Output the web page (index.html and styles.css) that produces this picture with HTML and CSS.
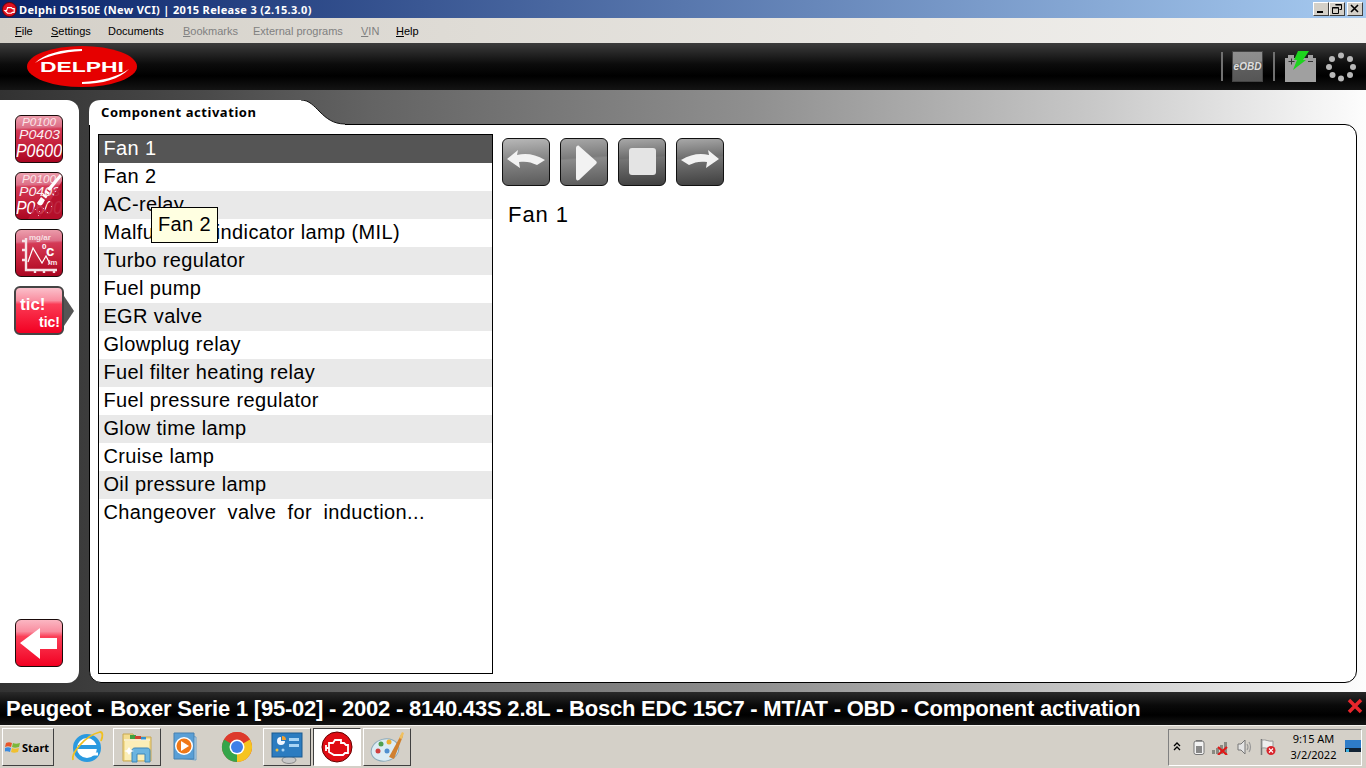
FILE: index.html
```html
<!DOCTYPE html>
<html>
<head>
<meta charset="UTF-8">
<title>Delphi DS150E</title>
<link rel="stylesheet" href="styles.css">
</head>
<body>
<div class="titlebar">
	<svg class="title-icon" width="15" height="15" viewBox="0 0 16 16"><circle cx="8" cy="8" r="7.500" fill="#e01020" stroke="#600" stroke-width="1"/><path d="M3 9h2l1-3h4l1 1h2v4h-2l-1 1H6z" fill="none" stroke="#fff" stroke-width="1.200"/></svg>
	<span class="title-text">Delphi DS150E (New VCI) | 2015 Release 3 (2.15.3.0)</span>
	<div class="win-btns">
		<span class="win-btn"><svg width="10" height="10" viewBox="0 0 10 10"><rect x="1" y="7" width="6" height="2" fill="#000"/></svg></span>
		<span class="win-btn"><svg width="10" height="10" viewBox="0 0 10 10"><path d="M3.500 .5h6v5h-2M.5 3.500h6v6h-6z M.5 4h6 M3.500 1h6" fill="none" stroke="#000"/></svg></span>
		<span class="win-btn win-close"><svg width="10" height="10" viewBox="0 0 10 10"><path d="M1 1l7 7M8 1l-7 7" stroke="#000" stroke-width="1.600"/></svg></span>
	</div>
</div>

<div class="menubar">
	<span class="menu-item m1"><u>F</u>ile</span>
	<span class="menu-item m2"><u>S</u>ettings</span>
	<span class="menu-item m3">Documents</span>
	<span class="menu-item m4 off"><u>B</u>ookmarks</span>
	<span class="menu-item m5 off">External programs</span>
	<span class="menu-item m6 off"><u>V</u>IN</span>
	<span class="menu-item"><u>H</u>elp</span>
</div>

<div class="header">
	<svg class="logo" width="110" height="41" viewBox="0 0 110 41">
		<ellipse cx="55" cy="20.500" rx="55" ry="20.500" fill="#e60000"/>
		<path d="M55 3C35 3 17 8 8 17 19 10 36 6 55 5z" fill="#fff"/>
		<path d="M55 38c20 0 38-5 47-15C91 31 74 35 55 36z" fill="#fff"/>
		<text x="55" y="26" class="logo-text" text-anchor="middle" textLength="84" lengthAdjust="spacingAndGlyphs">DELPHI</text>
	</svg>
	<div class="header-right">
		<span class="sep"></span>
		<span class="eobd">eOBD</span>
		<span class="sep"></span>
		<svg class="battery" width="33" height="32" viewBox="0 0 33 32">
			<path d="M1 7h3V4h6v3h14V4h5v3h3v24H1z" fill="#a0a0a0"/>
			<path d="M4.500 10.500h6M7.500 7.500v6" stroke="#333" stroke-width="1"/>
			<path d="M24 10.500h5" stroke="#333" stroke-width="1"/>
			<path d="M14 0h11l-6 9h3L9 19l4-10h-3z" fill="#1ed41e"/>
		</svg>
		<svg class="spinner" width="30" height="30" viewBox="0 0 30 30">
			<g fill="#b8b8b8"><circle cx="15" cy="3.500" r="3"/><circle cx="24" cy="7" r="3"/><circle cx="27" cy="15" r="3"/><circle cx="24" cy="23" r="3"/><circle cx="15" cy="26.500" r="3"/><circle cx="6.500" cy="23" r="3"/><circle cx="3" cy="15" r="3"/><circle cx="6" cy="7" r="3"/></g>
		</svg>
	</div>
</div>

<div class="workspace">
	<div class="sidebar">
		<div class="side-btn">
			<svg width="46" height="46" viewBox="0 0 46 46" class="side-svg">
				<text x="6" y="10" class="code c1" textLength="34" lengthAdjust="spacingAndGlyphs">P0100</text>
				<text x="3" y="23" class="code c2" textLength="41" lengthAdjust="spacingAndGlyphs">P0403</text>
				<text x="0" y="41" class="code c3" textLength="46" lengthAdjust="spacingAndGlyphs">P0600</text>
			</svg>
		</div>
		<div class="side-btn">
			<svg width="46" height="46" viewBox="0 0 46 46" class="side-svg">
				<text x="6" y="10" class="code c1" textLength="34" lengthAdjust="spacingAndGlyphs">P0100</text>
				<text x="3" y="23" class="code c2" textLength="41" lengthAdjust="spacingAndGlyphs">P0403</text>
				<text x="0" y="41" class="code c3" textLength="46" lengthAdjust="spacingAndGlyphs">P0600</text>
				<path d="M24 46L46 8v38z" fill="#b50f2b" opacity=".9"/>
				<path d="M12 46L24 24l8 4-8 18z" fill="#bd1432" opacity=".85"/>
				<path d="M44 1l2 2-12 15-3-2z" fill="#fff"/>
				<path d="M30 17l4 3-1.500 2-4-3zM27.500 20.500l4 3-1.500 2-4-3zM25 24l4 3-3 5c-2 1-4 0-5-2z" fill="#fff"/>
				<path d="M19 36h1v1h-1zM23 38h1v1h-1zM27 35h1v1h-1zM31 39h1v1h-1zM35 33h1v1h-1zM22 42h1v1h-1z" fill="#f0b0bc"/>
			</svg>
		</div>
		<div class="side-btn">
			<svg width="46" height="46" viewBox="0 0 46 46" class="side-svg">
				<path d="M10 8v32h31M6 11h4M6 20h4M6 30h4M19 40v3M28 40v3M38 40v3" fill="none" stroke="#f6e2e6" stroke-width="2.400"/>
				<path d="M12 32l5-14 9 15 4-7 4 8" fill="none" stroke="#fff" stroke-width="1.200"/>
				<text x="13" y="10" class="unit">mg/ar</text>
				<text x="26" y="19" class="unit-small">0</text>
				<text x="30" y="26" class="unit-big">c</text>
				<text x="32" y="35" class="unit">/m</text>
			</svg>
		</div>
		<div class="side-btn active">
			<svg class="side-svg" width="46" height="46" viewBox="0 0 46 46">
				<text x="4" y="22" class="tic t1">tic!</text>
				<text x="23" y="39" class="tic t2">tic!</text>
			</svg>
			<span class="active-arrow"></span>
		</div>
		<div class="side-spacer"></div>
		<div class="side-btn bright">
			<svg class="side-svg" width="46" height="46" viewBox="0 0 46 46"><path d="M4 23L24 8v10h17v11H24v10z" fill="#fff"/></svg>
		</div>
	</div>

	<div class="panel">
		<div class="tab-row">
			<svg class="tab-shape" width="256" height="25" viewBox="0 0 256 25"><path d="M0 25V12Q0 0 12 0H212C228 0 232 24 256 24V25z" fill="#fff"/><path d="M212 0C228 0 232 24 256 24" fill="none" stroke="#111" stroke-width="1"/></svg>
			<span class="tab-label">Component activation</span>
		</div>
		<div class="panel-body">
			<div class="list">
				<div class="row selected">Fan 1</div>
				<div class="row">Fan 2</div>
				<div class="row">AC-relay</div>
				<div class="row">Malfunction indicator lamp (MIL)</div>
				<div class="row">Turbo regulator</div>
				<div class="row">Fuel pump</div>
				<div class="row">EGR valve</div>
				<div class="row">Glowplug relay</div>
				<div class="row">Fuel filter heating relay</div>
				<div class="row">Fuel pressure regulator</div>
				<div class="row">Glow time lamp</div>
				<div class="row">Cruise lamp</div>
				<div class="row">Oil pressure lamp</div>
				<div class="row wide">Changeover valve for induction...</div>
			</div>
			<div class="tooltip">Fan 2</div>
			<div class="detail">
				<div class="tools">
					<div class="tool light"><svg width="46" height="46" viewBox="0 0 46 46"><path d="M4 20l11-9-1 5c9-2 18-1 28 5l-8 5c-6-3-11-4-18-3l1 6z" fill="#f2f2f2"/></svg></div>
					<div class="tool mid"><svg width="46" height="46" viewBox="0 0 46 46"><path d="M15 9c0-2 2-3 3-2l17 15c1 1 1 2 0 3L18 41c-2 1-3 0-3-2z" fill="#f2f2f2"/></svg></div>
					<div class="tool"><svg width="46" height="46" viewBox="0 0 46 46"><rect x="10" y="9" width="27" height="27" rx="3" fill="#e4e4e4"/></svg></div>
					<div class="tool"><svg width="46" height="46" viewBox="0 0 46 46"><path d="M42 20l-11-9 1 5c-9-2-18-1-28 5l8 5c6-3 11-4 18-3l-1 6z" fill="#f2f2f2"/></svg></div>
				</div>
				<div class="detail-name">Fan 1</div>
			</div>
		</div>
	</div>
</div>

<div class="statusbar">
	<span class="status-text">Peugeot - Boxer Serie 1 [95-02] - 2002 - 8140.43S 2.8L - Bosch EDC 15C7 - MT/AT - OBD - Component activation</span>
	<svg class="status-x" width="16" height="16" viewBox="0 0 16 16"><path d="M2 2l12 12M14 2L2 14" stroke="#e8262c" stroke-width="3.500"/></svg>
</div>

<div class="taskbar">
	<div class="start">
		<svg width="16" height="15" viewBox="0 0 16 15"><path d="M1 3c2-1 4-1 6 0l-1 4C4 6 2 6 0 7z" fill="#e8562a"/><path d="M8 3c2 1 4 1 7 0l-1 4c-3 1-5 1-7 0z" fill="#7cb83a"/><path d="M0 8c2-1 4-1 6 0l-1 4c-2-1-4-1-6 0z" fill="#3a8ade"/><path d="M7 8c2 1 4 1 7 0l-1 4c-3 1-5 1-7 0z" fill="#f0c030"/></svg>
		<span>Start</span>
	</div>
	<div class="task-items">
		<div class="task">
			<svg width="34" height="34" viewBox="0 0 34 34"><ellipse cx="17" cy="18" rx="12" ry="12" fill="#fff" stroke="#2a9ae0" stroke-width="4"/><path d="M8 17h19" stroke="#2a9ae0" stroke-width="4"/><path d="M28 24H18" stroke="#fff" stroke-width="3"/><path d="M3 30C1 24 14 6 30 2c3 0 3 4 1 9" fill="none" stroke="#f0c020" stroke-width="1.800"/></svg>
		</div>
		<div class="task btn">
			<svg width="32" height="32" viewBox="0 0 32 32"><path d="M2 3h10l2 3h16v24H2z" fill="#f3dc8e" stroke="#c8a850"/><path d="M9 4h6v4H9z" fill="#40a040"/><path d="M14 5h6v3h-6z" fill="#d04030"/><path d="M20 6h5v3h-5z" fill="#3090d0"/><path d="M3 9h26" stroke="#fff"/><path d="M4 10h24v19H4z" fill="#fbeeb8"/><path d="M11 31V20c0-2 1-3 3-3h12c2 0 3 1 3 3v11h-5v-8H16v8z" fill="#6ab4e0" stroke="#3d86b8"/><path d="M8 16l2 3 3 1-3 1-2 3-2-3-3-1 3-1z" fill="#fff"/></svg>
		</div>
		<div class="task">
			<svg width="34" height="32" viewBox="0 0 34 32"><path d="M8 3l18 3v23L8 27z" fill="#bcd9ee" stroke="#6ea0c8"/><path d="M4 2h20v26H4z" fill="#5a9fd6" stroke="#4680b0"/><circle cx="14" cy="15" r="9" fill="#fff"/><circle cx="14" cy="15" r="7.500" fill="#f07818"/><path d="M11 10l8 5-8 5z" fill="#fff"/></svg>
		</div>
		<div class="task">
			<svg width="32" height="32" viewBox="0 0 32 32"><circle cx="16" cy="16" r="15" fill="#dd3a2c"/><path d="M16 16L29 8.500A15 15 0 0 1 16 31z" fill="#f6c420"/><path d="M16 16L16 31A15 15 0 0 1 3 8.500z" fill="#35a54a"/><path d="M3 8.500A15 15 0 0 1 29 8.500H16z" fill="#dd3a2c"/><circle cx="16" cy="16" r="7.500" fill="#fff"/><circle cx="16" cy="16" r="6" fill="#3f7fe8"/></svg>
		</div>
		<div class="task btn">
			<svg width="34" height="34" viewBox="0 0 34 34"><ellipse cx="19" cy="30" rx="7" ry="3.500" fill="#c8c8c8" stroke="#888"/><rect x="2" y="3" width="30" height="24" fill="#2c7cc0" stroke="#1a5a90"/><path d="M11 7a4 4 0 1 0 4 4h-4z" fill="#f0f6ff"/><path d="M12 6a4 4 0 0 1 4 4h-4z" fill="#f0a030"/><path d="M19 8h10v3H19zM19 14h10v3H19z" fill="#a8d4f4"/><circle cx="7" cy="20" r="1.500" fill="#f0c040"/><circle cx="13" cy="20" r="1.500" fill="#a8d4f4"/></svg>
		</div>
		<div class="task btn pressed">
			<svg width="32" height="32" viewBox="0 0 32 32"><circle cx="16" cy="16" r="15" fill="#e00c14" stroke="#600" stroke-width="1"/><path d="M5 14v6M5 17h3M8 12h4l2-3h6v3h3l2 2h2v8h-3l-2 2H13l-5-3z" fill="none" stroke="#fff" stroke-width="1.800"/></svg>
		</div>
		<div class="task btn">
			<svg width="34" height="34" viewBox="0 0 34 34"><ellipse cx="15" cy="20" rx="14" ry="11" fill="#dcecf4" stroke="#8aa8b8" transform="rotate(-15 15 20)"/><circle cx="8" cy="21" r="2.500" fill="#d04040"/><circle cx="11" cy="14" r="2.500" fill="#50a050"/><circle cx="19" cy="12" r="2.500" fill="#f0b030"/><circle cx="17" cy="21" r="2.500" fill="#5090d0"/><path d="M19 27L31 5l2 1-9 23z" fill="#d08030"/><path d="M29 8l3-6 2 1-2 6z" fill="#f0c060"/></svg>
		</div>
	</div>
	<div class="tray">
		<span class="tray-up">
			<svg width="8" height="10" viewBox="0 0 8 10"><path d="M1 4l3-3 3 3M1 8l3-3 3 3" fill="none" stroke="#000" stroke-width="1.300"/></svg>
		</span>
		<svg class="tray-icon" width="12" height="16" viewBox="0 0 12 16"><rect x="1" y="2" width="10" height="13.500" rx="2" fill="#f2f2f2" stroke="#777"/><rect x="3" y="1" width="6" height="1.500" fill="#777"/><rect x="3" y="7" width="6" height="7" fill="#888"/></svg>
		<svg class="tray-icon" width="18" height="16" viewBox="0 0 18 16"><path d="M0 11h3v4H0zM4 9h3v6H4zM8 6h3v9H8zM12 3h3v12h-3z" fill="#8a8a82"/><path d="M6 8l9 8M15 8l-9 8" stroke="#e01818" stroke-width="2.200"/></svg>
		<svg class="tray-icon" width="16" height="16" viewBox="0 0 16 16"><path d="M1 5h3l4-4v14l-4-4H1z" fill="#e4e4e4" stroke="#777"/><path d="M10 5q2 3 0 6M12 3q3 5 0 10" fill="none" stroke="#999" stroke-width="1.200"/></svg>
		<svg class="tray-icon" width="16" height="16" viewBox="0 0 16 16"><path d="M1.500 0v16" stroke="#777" stroke-width="1.500"/><path d="M2 1c4-1 6 2 11 1v8c-4 1-7-2-11-1z" fill="#eee" stroke="#999"/><circle cx="11" cy="11.500" r="4.500" fill="#d8242c"/><path d="M9 9.500l4 4M13 9.500l-4 4" stroke="#fff" stroke-width="1.200"/></svg>
		<div class="clock"><span>9:15 AM</span><span>3/2/2022</span></div>
		<svg class="show-desktop" width="16" height="14" viewBox="0 0 16 14"><rect width="16" height="12" fill="#2e7cc8"/><rect y="8" width="16" height="4" fill="#123"/><rect x="1" y="9" width="3" height="3" fill="#3ab0e0"/></svg>
	</div>
</div>
</body>
</html>
```

FILE: styles.css
```css
html, body {
	margin: 0;
	padding: 0;
}
body {
	width: 1366px;
	height: 768px;
	overflow: hidden;
	display: flex;
	flex-direction: column;
	font-family: "Liberation Sans", Arial, sans-serif;
	background: #d4d0c8;
}
svg {
	display: block;
	flex: none;
}

/* title bar */
.titlebar {
	height: 18px;
	flex: none;
	display: flex;
	align-items: center;
	padding-left: 2px;
	gap: 2px;
	background: linear-gradient(90deg, #0a246a, #a6caf0);
	box-sizing: border-box;
}
.title-text {
	color: #fff;
	font: bold 11px "Noto Sans", sans-serif;
	letter-spacing: .33px;
	white-space: nowrap;
}
.win-btns {
	margin-left: auto;
	margin-right: 3px;
	display: flex;
}
.win-btn {
	width: 16px;
	height: 14px;
	background: #d4d0c8;
	border: 1px solid;
	border-color: #fff #404040 #404040 #fff;
	box-sizing: border-box;
	display: flex;
	align-items: center;
	justify-content: center;
}
.win-close {
	margin-left: 2px;
}

/* menu */
.menubar {
	height: 25px;
	flex: none;
	display: flex;
	align-items: center;
	padding-left: 15px;
	background: linear-gradient(90deg, #d4d0c8, #f3f2f0);
	font: 11px "Liberation Sans", sans-serif;
	color: #000;
}
.menu-item {
	white-space: nowrap;
}
.m1 { width: 36px; }
.m2 { width: 57px; }
.m3 { width: 75px; }
.m4 { width: 70px; }
.m5 { width: 108px; }
.m6 { width: 35px; }
.off {
	color: #808080;
}

/* black header */
.header {
	height: 47px;
	flex: none;
	display: flex;
	align-items: center;
	padding-left: 27px;
	background: linear-gradient(180deg, #3c3c3c 0, #0c0c0c 45%, #000 70%, #141414 100%);
}
.logo-text {
	font: bold 15px "Liberation Sans", sans-serif;
	fill: #fff;
}
.header-right {
	margin-left: auto;
	margin-right: 10px;
	display: flex;
	align-items: center;
}
.sep {
	width: 2px;
	height: 29px;
	background: #707070;
}
.eobd {
	width: 31px;
	height: 31px;
	margin: 0 10px 0 9px;
	box-sizing: border-box;
	border: 1px solid #444;
	background: linear-gradient(175deg, #8f8f8f 0, #8a8a8a 36%, #606060 42%, #555 100%);
	color: #ddd;
	font: italic bold 10px/29px "Liberation Sans", sans-serif;
	text-align: center;
}
.battery {
	margin-left: 9px;
	margin-right: 9px;
}

/* workspace */
.workspace {
	flex: 1;
	min-height: 0;
	display: flex;
	gap: 10px;
	padding: 10px 9px 9px 0;
	background: linear-gradient(90deg, #323232 0, #4a4a4a 15%, #636363 27%, #8f8f8f 55%, #c8c8c8 80%, #fdfdfd 100%);
}
.sidebar {
	width: 79px;
	flex: none;
	background: #fff;
	border-radius: 0 12px 12px 0;
	box-sizing: border-box;
	padding: 15px 0 16px 15px;
	display: flex;
	flex-direction: column;
	gap: 9px;
}
.side-spacer {
	flex: 1;
	margin-top: -9px;
}
.side-btn {
	position: relative;
	width: 48px;
	height: 48px;
	box-sizing: border-box;
	border: 1px solid #1a0a0a;
	border-radius: 6px;
	background: linear-gradient(178deg, #eda0ae 0, #dd7088 25%, #d43a56 30%, #c01a34 70%, #a80420 100%);
}
.side-svg {
	overflow: hidden;
	border-radius: 5px;
}
.side-btn.active {
	border: 2px solid #444;
	width: 50px;
	height: 49px;
	margin-left: -1px;
	background: linear-gradient(180deg, #fbc0cb 0, #f98ea0 28%, #fb3b55 36%, #f20022 100%);
}
.side-btn.bright {
	background: linear-gradient(180deg, #fbb6c2 0, #f98ea0 25%, #fb4058 36%, #f20022 100%);
}
.active-arrow {
	position: absolute;
	left: 48px;
	top: 8px;
	border-style: solid;
	border-width: 15px 0 15px 10px;
	border-color: transparent transparent transparent #555;
}
.code {
	font-family: "Liberation Sans", sans-serif;
	font-style: italic;
	fill: #fff;
}
.c1 { font-size: 10px; fill: #fbe4e8; }
.c2 { font-size: 13px; fill: #fbeef0; }
.c3 { font-size: 19px; }
.unit {
	font: bold 8px "Liberation Sans", sans-serif;
	fill: #f8e0e4;
}
.unit-small {
	font: bold 8px "Liberation Sans", sans-serif;
	fill: #fff;
}
.unit-big {
	font: bold 15px "Liberation Sans", sans-serif;
	fill: #fff;
}
.tic {
	font-family: "Liberation Sans", sans-serif;
	font-weight: bold;
	fill: #fff;
}
.t1 { font-size: 17px; }
.t2 { font-size: 14px; }

/* main panel */
.panel {
	flex: 1;
	min-width: 0;
	display: flex;
	flex-direction: column;
}
.tab-row {
	position: relative;
	height: 24px;
	flex: none;
}
.tab-shape {
	position: absolute;
	left: 0;
	top: 0;
	z-index: 1;
}
.tab-label {
	position: relative;
	z-index: 2;
	display: block;
	padding: 3px 0 0 12px;
	font: bold 13px "Noto Sans", sans-serif;
	letter-spacing: .55px;
	color: #000;
}
.panel-body {
	flex: 1;
	min-height: 0;
	position: relative;
	display: flex;
	gap: 9px;
	background: #fff;
	border: 1px solid #000;
	border-radius: 0 12px 12px 12px;
	padding: 9px 0 8px 8px;
}
.list {
	width: 395px;
	flex: none;
	background: #fff;
	border: 1px solid #000;
	box-sizing: border-box;
}
.row {
	height: 28px;
	padding-left: 4.400px;
	font-size: 20px;
	letter-spacing: .38px;
	line-height: 27px;
	color: #000;
	white-space: nowrap;
}
.row:nth-child(odd) {
	background: #e9e9e9;
}
.row.selected {
	background: #555;
	color: #fff;
}
.row.wide {
	background: #fff;
	word-spacing: 5.500px;
}
.tooltip {
	position: absolute;
	left: 61px;
	top: 82px;
	width: 67px;
	height: 36px;
	box-sizing: border-box;
	border: 1px solid #000;
	background: #ffffe1;
	font-size: 20px;
	letter-spacing: .4px;
	line-height: 32px;
	text-align: center;
}
.detail {
	flex: 1;
	padding-top: 4px;
}
.tools {
	display: flex;
	gap: 10px;
}
.tool {
	width: 48px;
	height: 48px;
	box-sizing: border-box;
	border: 1px solid #111;
	border-radius: 6px;
	background: linear-gradient(176deg, #a8a8a8 0, #6e6e6e 40%, #747474 43%, #3f3f3f 100%);
}
.tool.light {
	background: linear-gradient(176deg, #b8b8b8 0, #8c8c8c 38%, #888 42%, #5a5a5a 100%);
}
.tool.mid {
	background: linear-gradient(176deg, #a8a8a8 0, #7c7c7c 40%, #8a8a8a 44%, #5a5a5a 100%);
}
.detail-name {
	padding: 16px 0 0 6px;
	font-size: 22px;
	line-height: 26px;
	letter-spacing: .95px;
}

/* status bar */
.statusbar {
	height: 33px;
	flex: none;
	display: flex;
	align-items: center;
	padding: 0 3px 0 6px;
	background: linear-gradient(180deg, #2a2a2a 0, #0a0a0a 40%, #000 70%, #151515 100%);
}
.status-text {
	color: #fff;
	font-weight: bold;
	font-size: 22px;
	letter-spacing: -.22px;
	white-space: nowrap;
}
.status-x {
	margin-left: auto;
	margin-top: -6px;
}

/* taskbar */
.taskbar {
	height: 43px;
	flex: none;
	display: flex;
	align-items: center;
	background: #d4d0c8;
	border-top: 1px solid #f4f2ee;
	box-sizing: border-box;
	padding: 0 4px 0 2px;
}
.start {
	width: 52px;
	height: 38px;
	box-sizing: border-box;
	display: flex;
	align-items: center;
	gap: 1px;
	padding-left: 2px;
	border: 1px solid;
	border-color: #fff #404040 #404040 #fff;
	font: bold 11px "Noto Sans", sans-serif;
}
.task-items {
	display: flex;
	gap: 2px;
	margin-left: 9px;
}
.task {
	width: 48px;
	height: 38px;
	box-sizing: border-box;
	display: flex;
	align-items: center;
	justify-content: center;
	border: 1px solid transparent;
}
.task.btn {
	border-color: #fff #404040 #404040 #fff;
}
.task.pressed {
	border-color: #404040 #fff #fff #404040;
	background: #fff;
}
.tray {
	margin-left: auto;
	width: 194px;
	height: 37px;
	box-sizing: border-box;
	display: flex;
	align-items: center;
	border: 1px solid;
	border-color: #808080 #fff #fff #808080;
	padding-left: 4px;
}
.tray-up {
	width: 14px;
}
.tray-icon {
	margin-left: 8px;
}
.tray-icon + .tray-icon {
	margin-left: 7px;
}
.clock {
	margin-left: 11px;
	width: 62px;
	display: flex;
	flex-direction: column;
	align-items: center;
	font: 11px/16px "Noto Sans", sans-serif;
	color: #000;
}
.show-desktop {
	margin-left: 5px;
}
```
